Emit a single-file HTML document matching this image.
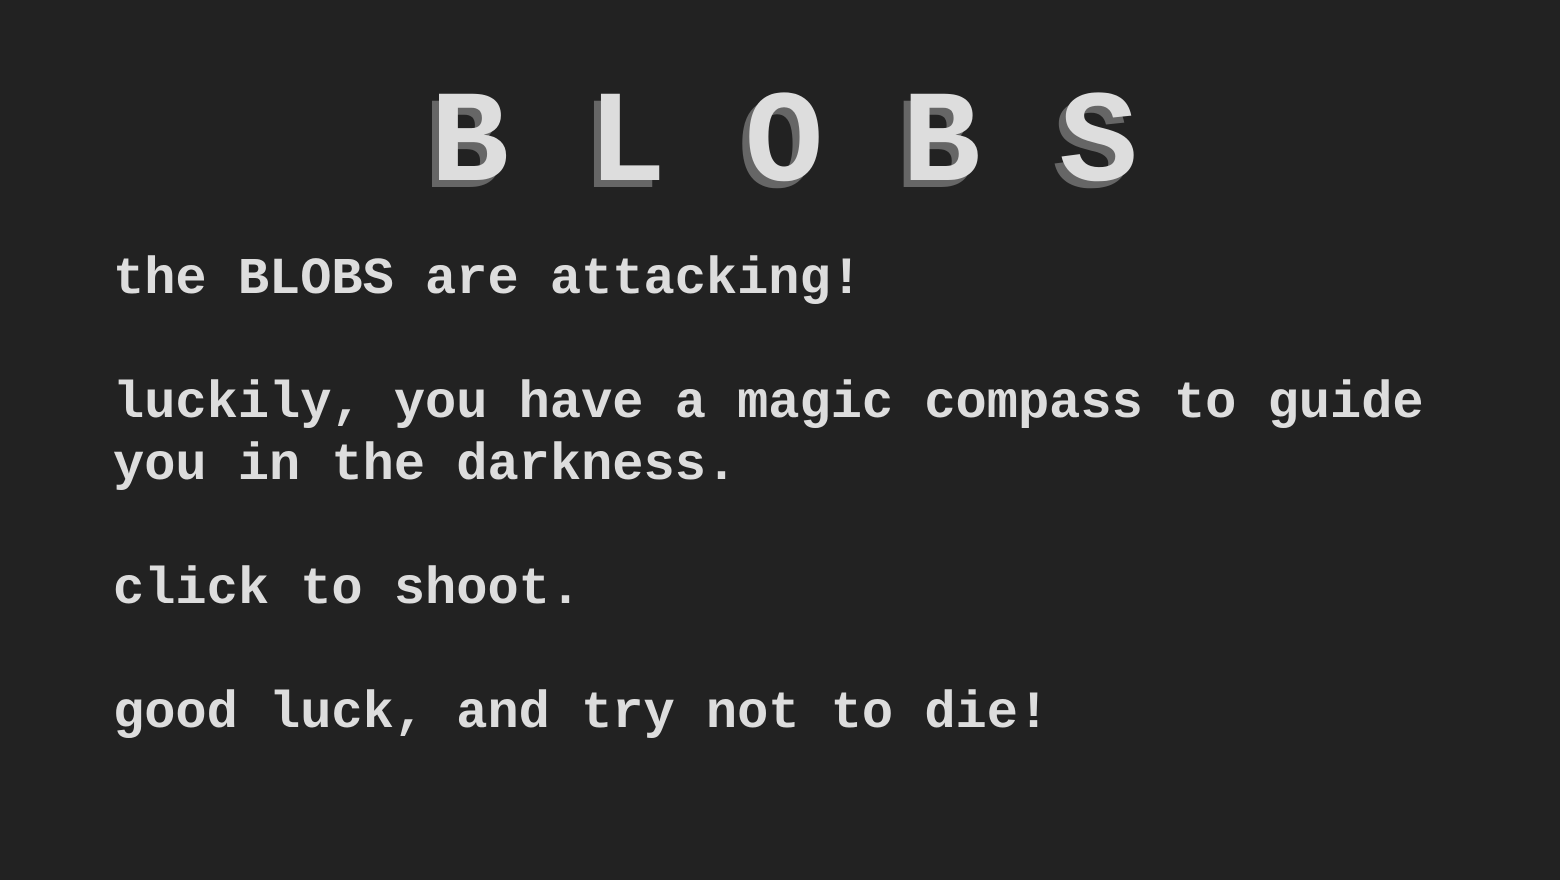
<!DOCTYPE html>
<html><head><style>
html,body{margin:0;padding:0;background:#222;width:1560px;height:880px;overflow:hidden}
body{font-family:"Courier New","Nimbus Mono PS","Nimbus Mono L","FreeMono","Liberation Mono",monospace;font-weight:bold;color:#ddd}
h1{position:absolute;left:0;width:1560px;top:71px;margin:0;text-align:center;font-size:131px;line-height:150px;text-shadow:-7px 7px 0 #666;white-space:pre;padding-left:8px;box-sizing:border-box;font-weight:bold}
.t{position:absolute;left:113px;top:249px;font-size:52px;line-height:62px;white-space:pre}
</style></head><body>
<h1>B L O B S</h1>
<div class="t">the BLOBS are attacking!

luckily, you have a magic compass to guide
you in the darkness.

click to shoot.

good luck, and try not to die!</div>
</body></html>
